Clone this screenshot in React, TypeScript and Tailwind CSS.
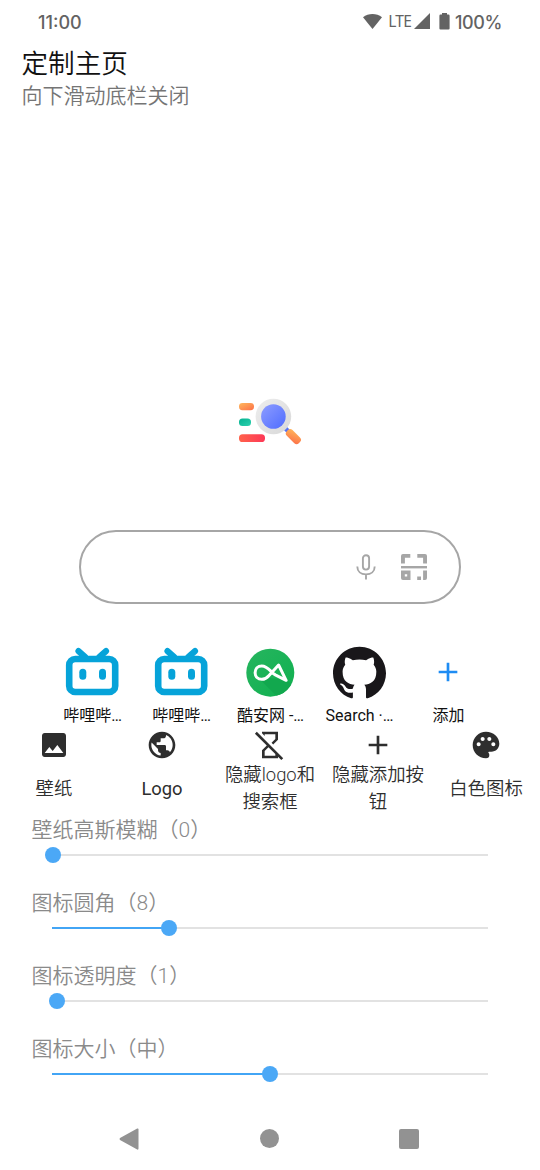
import React, { FC, ReactNode } from "react";
import {
  MdAdd,
  MdHourglassDisabled,
  MdImage,
  MdPalette,
  MdPublic,
} from "react-icons/md";
import { SiGithub } from "react-icons/si";

const StatusBar: FC = () => (
  <div className="flex h-[44px] items-center pl-[38px] pr-[38px] text-[#636363]">
    <span className="font-[Inter] text-[18px] font-medium">11:00</span>
    <div className="ml-auto flex items-center">
      <svg width="21" height="18" viewBox="0 0 21 18" fill="#636363">
        <path d="M1 4.2C6.5 -0.2 14.5 -0.2 20 4.2L10.5 16Z" />
      </svg>
      <span className="ml-[5px] mt-[-3px] font-['Noto_Sans'] text-[15.5px] leading-[20px] tracking-[-0.8px]">LTE</span>
      <svg className="ml-[3px] mt-[-2px]" width="16" height="16" viewBox="0 0 16 16" fill="#636363">
        <path d="M16 0V16H0Z" />
      </svg>
      <svg className="ml-[9px]" width="11" height="18" viewBox="0 0 11 18" fill="#636363">
        <path d="M3 0H8V1.6H9.5Q10.6 1.6 10.6 2.7V15.5Q10.6 16.6 9.5 16.6H1.5Q0.4 16.6 0.4 15.5V2.7Q0.4 1.6 1.5 1.6H3Z" />
      </svg>
      <span className="ml-[5px] font-[Inter] text-[18px] font-medium tracking-[-0.4px]">100%</span>
    </div>
  </div>
);

const SearchLogo: FC = () => (
  <svg width="64" height="48" viewBox="0 0 64 48" fill="none">
    <defs>
      <linearGradient id="orange" x1="0" y1="0" x2="1" y2="1">
        <stop stopColor="#ffb85c" />
        <stop offset="1" stopColor="#fc6f48" />
      </linearGradient>
      <linearGradient id="green" x1="0" y1="0" x2="1" y2="1">
        <stop stopColor="#05b291" />
        <stop offset="1" stopColor="#2dd0ae" />
      </linearGradient>
      <linearGradient id="red" x1="0" y1="0" x2="1" y2="0">
        <stop stopColor="#ff624b" />
        <stop offset="1" stopColor="#fd3857" />
      </linearGradient>
      <linearGradient id="lens" x1="0" y1="0" x2="1" y2="1">
        <stop stopColor="#8e9dff" />
        <stop offset="1" stopColor="#4f6cff" />
      </linearGradient>
      <linearGradient id="rim" x1="0" y1="0" x2="1" y2="1">
        <stop stopColor="#eeeeee" />
        <stop offset="1" stopColor="#d8d8d8" />
      </linearGradient>
    </defs>
    <rect x="1" y="5" width="15" height="7.2" rx="3.4" fill="url(#orange)" />
    <rect x="1" y="20.6" width="12" height="7.5" rx="3.5" fill="url(#green)" />
    <rect x="1" y="36.2" width="26" height="7.8" rx="3.6" fill="url(#red)" />
    <path d="M46 29L51 34" stroke="#5474f5" strokeWidth="4.5" />
    <rect x="-8.5" y="-4" width="17" height="8" rx="3.2" transform="translate(55.4 38.6) rotate(45)" fill="url(#orange)" />
    <circle cx="35.4" cy="18.5" r="17.8" fill="url(#rim)" />
    <circle cx="35.4" cy="18.5" r="12.3" fill="url(#lens)" />
  </svg>
);

const MicIcon: FC = () => (
  <svg width="20" height="26" viewBox="0 0 20 26" fill="none" stroke="#a6a6a6" strokeWidth="1.9">
    <rect x="6.9" y="1.2" width="6.2" height="14.4" rx="3.1" />
    <path d="M1.3 12.5C1.3 17.5 5 20.4 10 20.4S18.7 17.5 18.7 12.5M10 20.4V25.5" />
  </svg>
);

const ScanIcon: FC = () => (
  <svg width="26" height="26" viewBox="0 0 26 26" fill="#a6a6a6">
    <path d="M2 0H9.3V3.7H3.9V9.5H0V2Q0 0 2 0Z" />
    <path d="M16.3 0H24Q26 0 26 2V9.5H22.1V3.7H16.3Z" />
    <path d="M0 12H26V14.4H0Z" />
    <path fillRule="evenodd" d="M0 16.5H9.5V26H2Q0 26 0 24ZM3.8 20.2V22.6H6.2V20.2Z" />
    <path d="M16.2 22.6H20V26H16.2ZM22.1 16.5H26V24Q26 26 24 26H22.1Z" />
  </svg>
);

const BiliIcon: FC = () => (
  <svg width="54" height="54" viewBox="0 -0.8 54 54" fill="none">
    <path d="M13.5 5.3L20 11M41 5.3L34.5 11" stroke="#06a3d9" strokeWidth="6.2" strokeLinecap="round" />
    <rect x="4.2" y="13.2" width="46" height="33" rx="6" stroke="#06a3d9" strokeWidth="6.6" />
    <rect x="14.3" y="23" width="7" height="11" rx="3.5" fill="#06a3d9" />
    <rect x="34" y="23" width="7" height="11" rx="3.5" fill="#06a3d9" />
  </svg>
);

const CoolapkIcon: FC = () => (
  <svg width="54" height="54" viewBox="-0.3 -0.7 54 54" fill="none">
    <defs>
      <clipPath id="coolClip">
        <circle cx="27" cy="27" r="24" />
      </clipPath>
      <linearGradient id="coolBg" x1="0" y1="0" x2="1" y2="1">
        <stop stopColor="#27b55f" />
        <stop offset="1" stopColor="#0fb04f" />
      </linearGradient>
    </defs>
    <circle cx="27" cy="27" r="24" fill="url(#coolBg)" />
    <path d="M14 31L38 55H55V44L43 34Z" fill="#12a84e" clipPath="url(#coolClip)" />
    <path
      d="M18.5 20.3C14.6 20.3 11.8 23.2 11.8 27C11.8 30.8 14.6 33.6 18.5 33.6C21.6 33.6 23.5 32.5 25.5 30L35.3 19.3L42.8 34.6L32 29.2C28 27 24.5 20.3 18.5 20.3Z"
      stroke="#fff"
      strokeWidth="3"
      strokeLinejoin="round"
    />
  </svg>
);

interface ShortcutProps {
  icon: ReactNode;
  label: string;
}

const Shortcut: FC<ShortcutProps> = ({ icon, label }) => (
  <div className="flex w-[89px] flex-col items-center">
    <div className="flex h-[54px] w-[54px] items-center justify-center">{icon}</div>
    <span className="mt-[5px] h-[24px] whitespace-nowrap pl-px text-[16px] leading-[24px] text-[#111]">
      {label}
    </span>
  </div>
);

const shortcuts: ShortcutProps[] = [
  { icon: <BiliIcon />, label: "哔哩哔…" },
  { icon: <BiliIcon />, label: "哔哩哔…" },
  { icon: <CoolapkIcon />, label: "酷安网 -…" },
  { icon: <SiGithub size={53} color="#19171a" />, label: "Search ·…" },
  { icon: <MdAdd size={32} color="#1e8cf3" />, label: "添加" },
];

const actions = [
  { icon: <MdImage size={32} />, label: "壁纸", weight: "font-[350]" },
  { icon: <MdPublic size={32} />, label: "Logo", weight: "font-normal" },
  { icon: <MdHourglassDisabled size={32} />, label: "隐藏logo和搜索框", weight: "font-[350]" },
  { icon: <MdAdd size={32} />, label: "隐藏添加按钮", weight: "font-[350]" },
  { icon: <MdPalette size={32} />, label: "白色图标", weight: "font-[350]" },
];

// position is the thumb centre, in px from the left end of the track
const sliders = [
  { label: "壁纸高斯模糊（0）", position: 1 },
  { label: "图标圆角（8）", position: 117 },
  { label: "图标透明度（1）", position: 5 },
  { label: "图标大小（中）", position: 218 },
];

const Slider: FC<{ label: string; position: number }> = ({ label, position }) => (
  <div className="h-[73px]">
    <div className="h-[30px] pl-[31.5px] text-[21px] font-[350] leading-[30px] text-[#8a8a8a]">
      {label}
    </div>
    <div className="relative ml-[52px] mt-[2px] flex h-[16px] w-[436px] items-center">
      <div className="h-[2.5px] w-full bg-[#e2e2e2]">
        <div className="h-full bg-[#42a5f5]" style={{ width: position }} />
      </div>
      <div
        className="absolute top-0 h-[16px] w-[16px] -translate-x-1/2 rounded-full bg-[#4ba8f6]"
        style={{ left: position }}
      />
    </div>
  </div>
);

const App: FC = () => {
  return (
    <div
      lang="zh-CN"
      className="flex h-[1170px] w-[540px] flex-col overflow-hidden bg-white font-[Roboto,'Noto_Sans_CJK_SC',sans-serif]"
    >
      <StatusBar />
      <header className="h-[354px] pl-[21.5px]">
        <h1 className="h-[39px] text-[26.6px] font-[350] leading-[40px] text-[#111]">定制主页</h1>
        <p className="h-[26px] text-[21px] font-[350] leading-[26px] text-[#757575]">
          向下滑动底栏关闭
        </p>
      </header>

      <div className="flex h-[132px] justify-center">
        <SearchLogo />
      </div>

      <div className="mx-auto flex h-[74px] w-[382px] items-center justify-end rounded-full border-2 border-[#a6a6a6] pr-[32px]">
        <MicIcon />
        <div className="ml-[25px]">
          <ScanIcon />
        </div>
      </div>

      <div className="mt-[41px] flex h-[84px] justify-center">
        {shortcuts.map((item, index) => (
          <Shortcut key={index} icon={item.icon} label={item.label} />
        ))}
      </div>

      <div className="grid h-[86px] grid-cols-5 text-[#2e2e2e]">
        {actions.map((item) => (
          <div key={item.label} className="flex flex-col items-center">
            {item.icon}
            <div
              className={`flex h-[54px] w-[96px] items-center justify-center text-center text-[18.4px] leading-[27px] ${item.weight}`}
            >
              {item.label}
            </div>
          </div>
        ))}
      </div>

      <div className="h-[292px]">
        {sliders.map((item) => (
          <Slider key={item.label} label={item.label} position={item.position} />
        ))}
      </div>

      <nav className="flex h-[63px] items-center justify-between pl-[119px] pr-[121px]">
        <svg width="20" height="22" viewBox="0 0 20 22" fill="#929292">
          <path d="M18.2 0.5Q19.5 0 19.5 1.5V20.5Q19.5 22 18.2 21.5L1 12Q0 11 1 10Z" />
        </svg>
        <div className="h-[19px] w-[19px] rounded-full bg-[#929292]" />
        <div className="h-[20px] w-[20px] rounded-[2px] bg-[#929292]" />
      </nav>
    </div>
  );
};

export default App;
